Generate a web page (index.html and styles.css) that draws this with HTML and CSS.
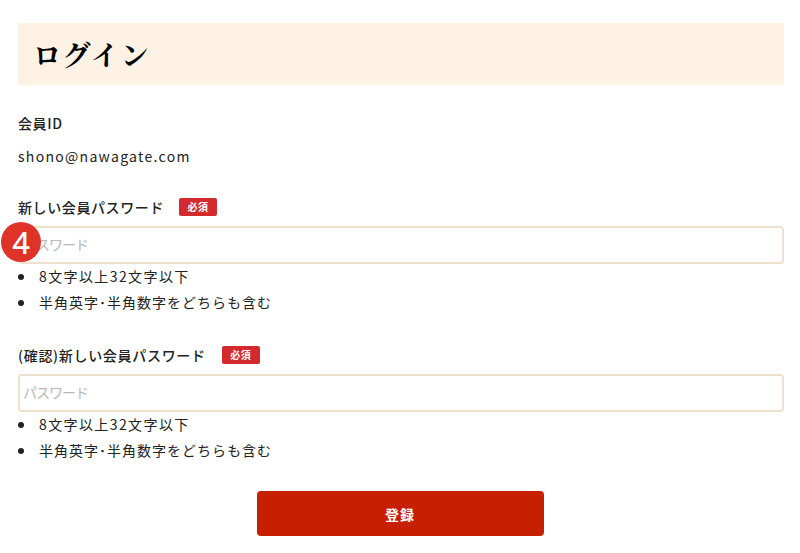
FILE: index.html
```html
<!DOCTYPE html>
<html lang="ja">

<head>
    <meta charset="UTF-8">
    <title>ログイン</title>
    <link rel="stylesheet" href="styles.css">
</head>

<body>
    <h1 class="page-title">ログイン</h1>

    <div class="member">
        <p class="label">会員ID</p>
        <p class="member-id">shono@nawagate.com</p>
    </div>

    <div class="field">
        <div class="label-row">
            <label class="label" for="password">新しい会員パスワード</label>
            <span class="required">必須</span>
        </div>
        <div class="input-wrap">
            <input id="password" type="password" placeholder="パスワード">
            <span class="step">4</span>
        </div>
        <ul class="rules">
            <li>8文字以上32文字以下</li>
            <li>半角英字･半角数字をどちらも含む</li>
        </ul>
    </div>

    <div class="field">
        <div class="label-row label-row-wide">
            <label class="label" for="passwordConfirm">(確認)新しい会員パスワード</label>
            <span class="required">必須</span>
        </div>
        <div class="input-wrap">
            <input id="passwordConfirm" type="password" placeholder="パスワード">
        </div>
        <ul class="rules">
            <li>8文字以上32文字以下</li>
            <li>半角英字･半角数字をどちらも含む</li>
        </ul>
    </div>

    <div class="actions">
        <button class="submit">登録</button>
    </div>
</body>

</html>
```

FILE: styles.css
```css
body {
    background-color: #ffffff;
    color: #222222;
    font-family: "Noto Sans CJK JP", "Noto Sans", sans-serif;
    font-size: 14px;
    margin: 0;
    padding: 23px 16px 0 18px;
}

p {
    margin: 0;
}

.page-title {
    background-color: #fef2e5;
    color: #000000;
    font-family: "Noto Serif CJK JP", "Liberation Serif", "Noto Sans CJK JP", serif;
    font-size: 28px;
    font-weight: 700;
    line-height: 62px;
    height: 62px;
    margin: 0;
    padding-left: 15px;
    letter-spacing: 1.6px;
}

.member {
    margin-top: 27px;
}

.label {
    font-size: 14px;
    font-weight: 500;
    line-height: 22px;
    letter-spacing: 0.6px;
    display: block;
}

.member-id {
    font-size: 14px;
    line-height: 22px;
    letter-spacing: 1.3px;
    margin-top: 11px;
}

.field {
    margin-top: 29px;
}

.label-row {
    display: flex;
    align-items: center;
    gap: 15px;
    height: 22px;
}

.label-row-wide {
    gap: 16px;
}

.label-row-wide .label {
    letter-spacing: 0.7px;
}

.required {
    background-color: #d32a2e;
    color: #ffffff;
    font-size: 10px;
    font-weight: 700;
    line-height: 18px;
    height: 18px;
    width: 38px;
    text-align: center;
    border-radius: 2px;
    letter-spacing: 0.5px;
}

.input-wrap {
    position: relative;
    margin-top: 8px;
}

input {
    display: block;
    box-sizing: border-box;
    width: 100%;
    height: 38px;
    padding: 0 3px 2px;
    background-color: #ffffff;
    border: 2px solid #efe0cd;
    border-radius: 4px;
    font-family: inherit;
    font-size: 14px;
    letter-spacing: -1px;
    outline: none;
}

input::placeholder {
    color: #b8b8b8;
}

.step {
    position: absolute;
    left: -17px;
    top: -4px;
    width: 40px;
    height: 40px;
    border-radius: 50%;
    background-color: #df3229;
    color: #ffffff;
    font-family: "Noto Sans", sans-serif;
    font-size: 31px;
    font-weight: 500;
    line-height: 40px;
    text-align: center;
}

.rules {
    list-style: none;
    margin: -1px 0 0;
    padding: 0;
}

.rules li {
    position: relative;
    padding-left: 21px;
    font-size: 14px;
    line-height: 26px;
    letter-spacing: 1px;
}

.rules li:first-child {
    letter-spacing: 1.4px;
}

.rules li::before {
    content: "";
    position: absolute;
    left: 0;
    top: 11px;
    width: 6px;
    height: 6px;
    border-radius: 50%;
    background-color: #222222;
}

.actions {
    display: flex;
    justify-content: center;
    margin-top: 28px;
    padding-right: 2px;
}

.submit {
    width: 287px;
    height: 45px;
    background-color: #c62000;
    color: #ffffff;
    border: none;
    border-radius: 4px;
    font-family: inherit;
    font-size: 14px;
    font-weight: 700;
    letter-spacing: 1px;
}
```
